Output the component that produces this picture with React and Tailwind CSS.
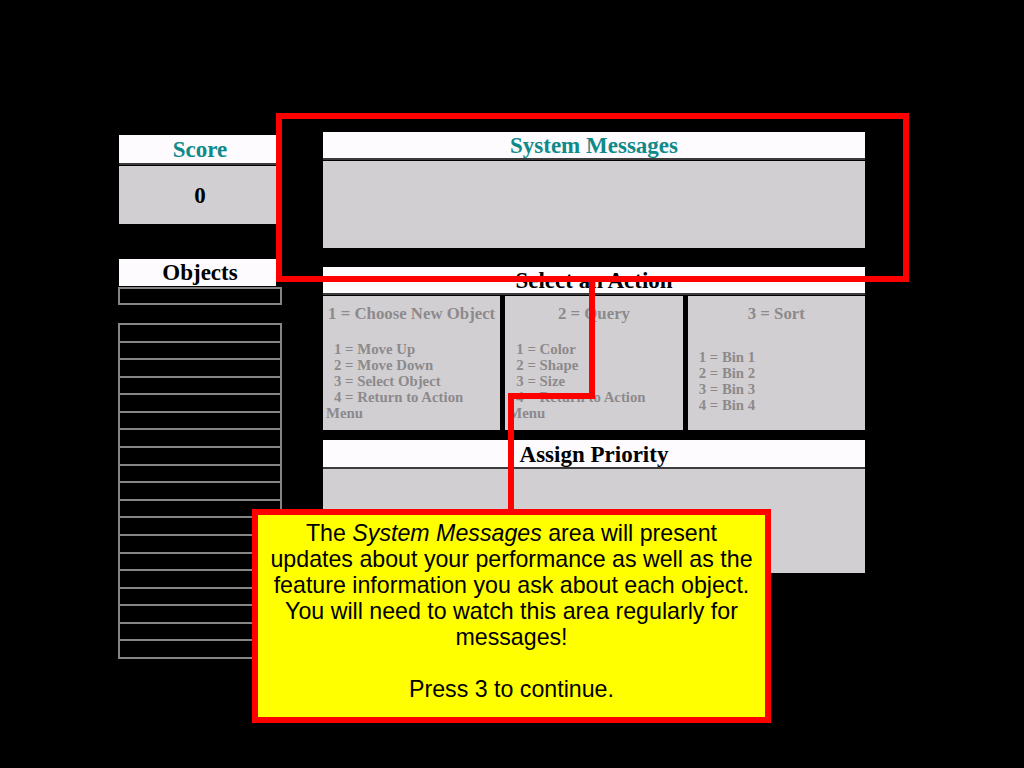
import React from "react";

const serif = { fontFamily: '"Liberation Serif", "Times New Roman", serif' };

function Header({ children, teal, className = "" }) {
  return (
    <div
      className={`bg-[#fdfbfd] border-b-2 border-[#3c3c3c] flex items-center justify-center font-bold text-[23px] leading-[24px] pt-[2px] ${
        teal ? "text-[#0f8a8a]" : "text-black"
      } ${className}`}
      style={serif}
    >
      {children}
    </div>
  );
}

function Panel({ title, items, lastWrap }) {
  return (
    <div
      className="bg-[#d2cfd2] flex-1 flex flex-col text-[#8c8a8c] font-bold pl-[3px] pr-[3px]"
      style={serif}
    >
      <div className="text-center text-[16.8px] leading-[20px] mt-[8px] whitespace-nowrap">{title}</div>
      <div className="h-[96px] mt-[9px] flex flex-col justify-center text-[14.8px] leading-[16px]">
        {items.map((t, i) => (
          <div key={i} className={i === items.length - 1 && lastWrap ? "" : "pl-[8px]"}>
            {i === items.length - 1 && lastWrap ? (
              <>
                <span className="pl-[8px]">{t}</span>
                <br />
                {lastWrap}
              </>
            ) : (
              t
            )}
          </div>
        ))}
      </div>
    </div>
  );
}

export default function App() {
  const rows = Array.from({ length: 19 });
  return (
    <div className="w-[1024px] h-[768px] bg-black relative overflow-hidden">
      <div className="flex pt-[132px] pl-[118px]">
        {/* Left column */}
        <div className="w-[164px] flex flex-col">
          <div className="mt-[3px] ml-[1px] w-[157px]">
            <Header teal className="h-[30px] pb-[1px] pl-[5px]">Score</Header>
            <div
              className="mt-[1px] h-[58px] bg-[#d2cfd2] flex items-center justify-center font-bold text-[23px] text-black pt-[2px] pl-[5px]"
              style={serif}
            >
              0
            </div>
          </div>
          <div
            className="mt-[35px] ml-[1px] w-[157px] h-[27px] bg-[#fdfbfd] flex items-center justify-center font-bold text-[23px] leading-[24px] pt-[1px] pl-[5px] text-black"
            style={serif}
          >
            Objects
          </div>
          <div className="mt-[1px] h-[18px] border-2 border-[#858585]" />
          <div className="mt-[18px] h-[336px] border-2 border-[#858585] flex flex-col">
            {rows.map((_, i) => (
              <div
                key={i}
                className={`flex-1 ${i > 0 ? "border-t-2 border-[#858585]" : ""}`}
              />
            ))}
          </div>
        </div>

        {/* Center column */}
        <div className="ml-[41px] w-[542px] flex flex-col">
          <Header teal className="h-[28px]">System Messages</Header>
          <div className="mt-[1px] h-[87px] bg-[#d2cfd2]" />
          <div className="mt-[19px]">
            <Header className="h-[28px]">Select an Action</Header>
          </div>
          <div className="mt-[1px] h-[134px] flex gap-[5px]">
            <Panel
              title="1 = Choose New Object"
              items={["1 = Move Up", "2 = Move Down", "3 = Select Object", "4 = Return to Action"]}
              lastWrap="Menu"
            />
            <Panel
              title="2 = Query"
              items={["1 = Color", "2 = Shape", "3 = Size", "4 = Return to Action"]}
              lastWrap="Menu"
            />
            <Panel title="3 = Sort" items={["1 = Bin 1", "2 = Bin 2", "3 = Bin 3", "4 = Bin 4"]} />
          </div>
          <div className="mt-[10px]">
            <Header className="h-[29px]">Assign Priority</Header>
          </div>
          <div className="h-[104px] bg-[#d2cfd2]" />
        </div>
      </div>

      {/* Highlight rectangle */}
      <div className="absolute left-[276px] top-[113px] w-[633px] h-[169px] border-[6px] border-[#ff0000]" />
      {/* Connector */}
      <div className="absolute left-[589px] top-[280px] w-[6px] h-[119px] bg-[#ff0000]" />
      <div className="absolute left-[508px] top-[393px] w-[87px] h-[6px] bg-[#ff0000]" />
      <div className="absolute left-[508px] top-[393px] w-[6px] h-[118px] bg-[#ff0000]" />

      {/* Callout */}
      <div
        className="absolute left-[252px] top-[509px] w-[519px] h-[214px] border-[6px] border-[#ff0000] bg-[#ffff00] text-black text-center text-[23.2px] leading-[26px] pt-[5px] whitespace-nowrap"
        style={{ fontFamily: '"Liberation Sans", Arial, sans-serif' }}
      >
        The <i>System Messages</i> area will present
        <br />
        updates about your performance as well as the
        <br />
        feature information you ask about each object.
        <br />
        You will need to watch this area regularly for
        <br />
        messages!
        <br />
        <br />
        Press 3 to continue.
      </div>
    </div>
  );
}
